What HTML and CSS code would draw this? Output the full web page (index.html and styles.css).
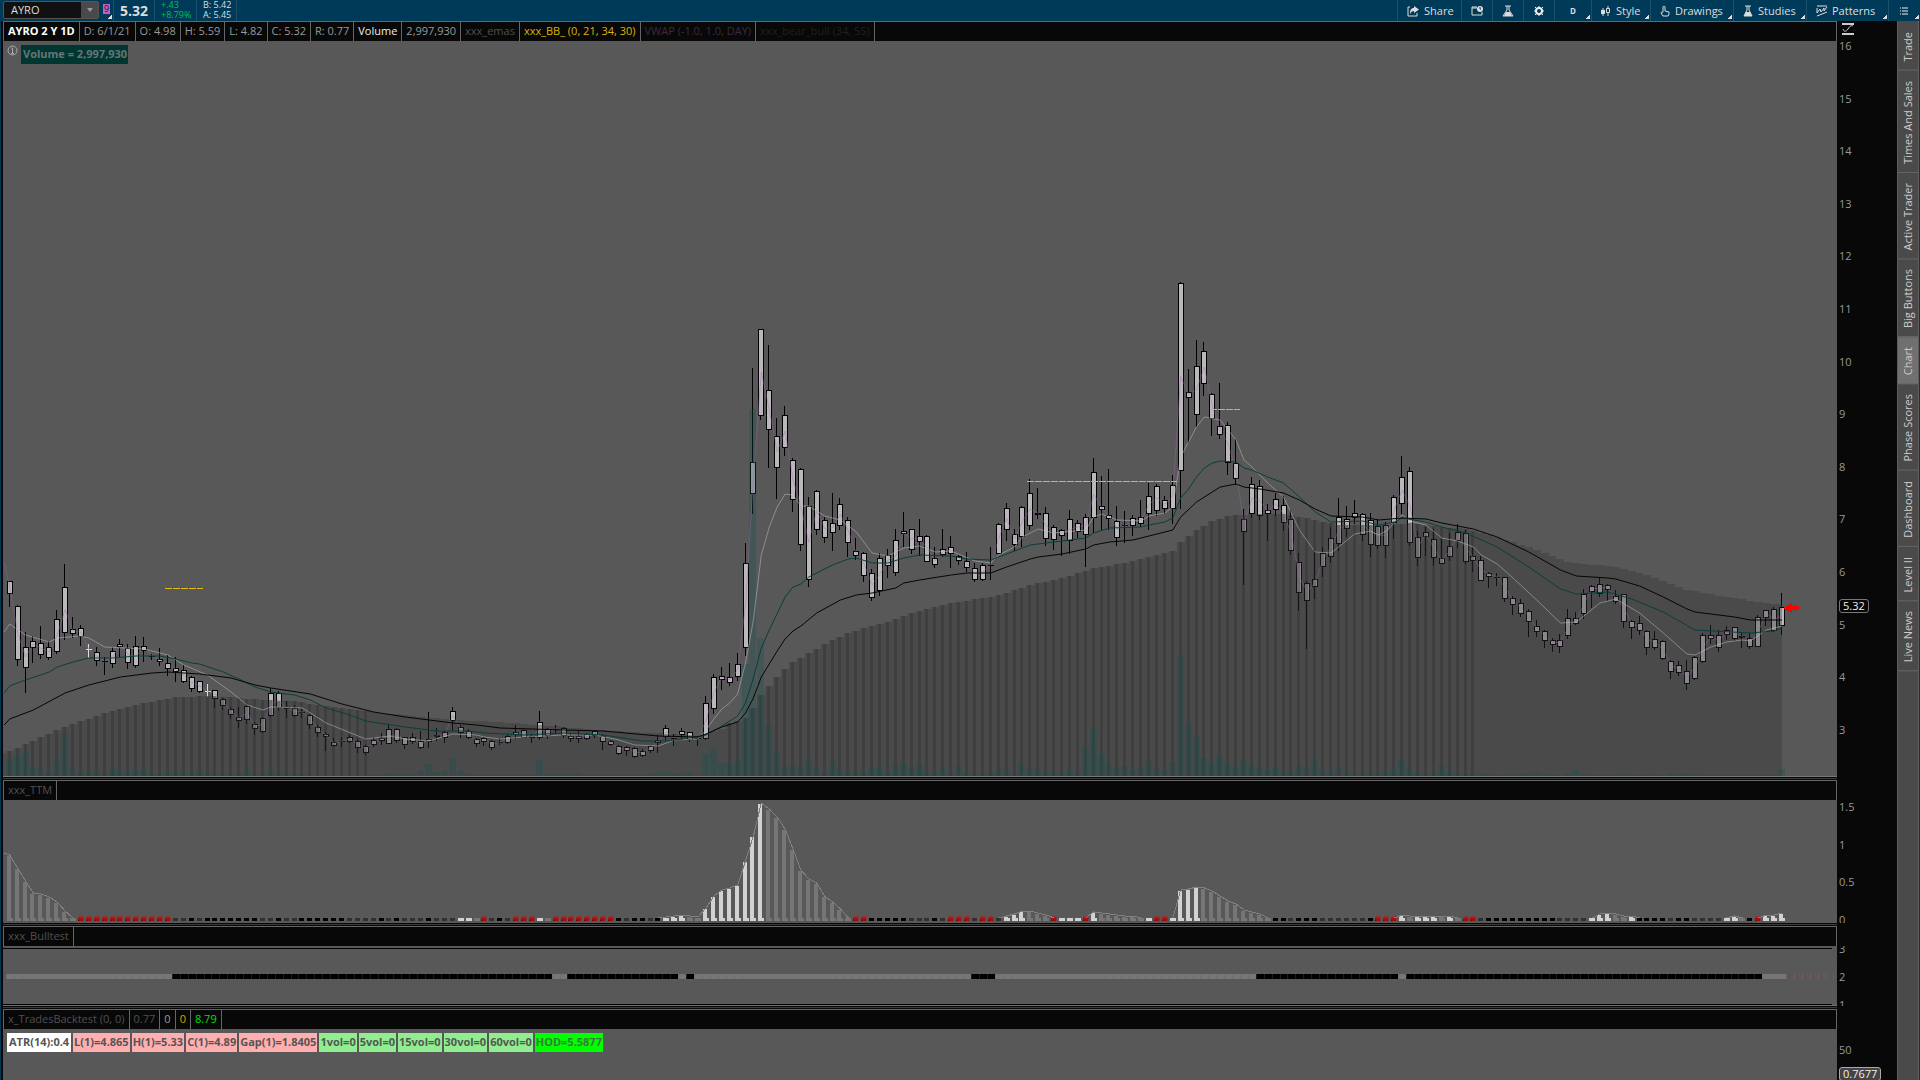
FILE: index.html
```html
<!DOCTYPE html>
<html lang="en">
<head>
    <meta charset="UTF-8">
    <meta name="viewport" content="width=device-width, initial-scale=1.0">
    <title>AYRO - Charts</title>
    <link rel="stylesheet" href="styles.css">
</head>
<body>

<!-- Top toolbar -->
<header class="toolbar">
    <div class="symbol-box">
        <input type="text" class="symbol-input" value="AYRO" aria-label="Symbol">
        <button type="button" class="symbol-drop" aria-label="Symbol list"><svg width="6" height="4" viewBox="0 0 6 4"><path d="M0 0h6L3 4z" fill="#999"/></svg></button>
    </div>
    <button type="button" class="link-btn corner" aria-label="Link color 9"><span class="link-badge">9</span></button>
    <div class="last">5.32</div>
    <div class="change"><span>+.43</span><span>+8.79%</span></div>
    <div class="bidask"><span>B: 5.42</span><span>A: 5.45</span></div>

    <nav class="tools">
        <button type="button" class="tool share">
            <svg width="12" height="12" viewBox="0 0 12 12"><path d="M3 2H1v9h9V8" fill="none" stroke="#ddd"/><path d="M7 1l5 3.500-5 3.500V6C5 6 4 7 3 9c0-4 1-6 4-6z" fill="#ddd"/></svg>
            Share
        </button>
        <button type="button" class="tool icon-only" aria-label="Detach">
            <svg width="12" height="12" viewBox="0 0 12 12"><path d="M6 2H1v8h10V7M1 3h5" fill="none" stroke="#ddd"/><circle cx="9" cy="4" r="3" fill="#ddd"/><path d="M9 2v2h1" stroke="#003a59" fill="none"/></svg>
        </button>
        <button type="button" class="tool icon-only" aria-label="Edit studies">
            <svg width="12" height="12" viewBox="0 0 12 12"><path d="M3 1h6M5 1v4L1 11h10L7 5V1" fill="none" stroke="#ddd"/><path d="M4 7h4l2 4H2z" fill="#ddd"/></svg>
        </button>
        <button type="button" class="tool icon-only" aria-label="Chart settings">
            <svg width="12" height="12" viewBox="0 0 12 12"><circle cx="6" cy="6" r="3" fill="none" stroke="#eee" stroke-width="2"/><path d="M6 1v2M6 9v2M1 6h2M9 6h2M2 2l2 2M8 8l2 2M10 2L8 4M4 8l-2 2" stroke="#eee"/></svg>
        </button>
        <button type="button" class="tool period corner">D</button>
        <button type="button" class="tool style corner">
            <svg width="10" height="12" viewBox="0 0 10 12"><path d="M2 3v8M7 1v10" stroke="#ddd"/><path d="M0 5h4v4H0z" fill="#ddd"/><path d="M5.500 3.500h3v4h-3z" fill="#003a59" stroke="#ddd"/></svg>
            Style
        </button>
        <button type="button" class="tool drawings corner">
            <svg width="10" height="12" viewBox="0 0 10 12"><path d="M3 7V2c0-1 2-1 2 0v4l4 1v2L8 11H3L1 8c0-1 1-1 2 0" fill="none" stroke="#ddd"/></svg>
            Drawings
        </button>
        <button type="button" class="tool studies corner">
            <svg width="10" height="12" viewBox="0 0 10 12"><path d="M2 1h6M4 1v4L1 11h8L6 5V1" fill="none" stroke="#ddd"/><path d="M3 7h4l2 4H1z" fill="#ddd"/></svg>
            Studies
        </button>
        <button type="button" class="tool patterns corner">
            <svg width="12" height="12" viewBox="0 0 12 12"><path d="M1 1h10M1 11l10-4M1 3v5l3-4 1 3 3-4v3l3-4" fill="none" stroke="#ddd"/></svg>
            Patterns
        </button>
        <button type="button" class="tool menu corner" aria-label="Menu">
            <svg width="8" height="8" viewBox="0 0 8 8"><path d="M0 1h1M2 1h6M0 4h1M2 4h6M0 7h1M2 7h6" stroke="#eee"/></svg>
        </button>
    </nav>
</header>

<div class="workspace">
    <main class="charts">

        <!-- Price -->
        <section class="row price-row">
            <div class="pane">
                <div class="legend">
                    <span class="strong">AYRO 2 Y 1D</span>
                    <span>D: 6/1/21</span>
                    <span>O: 4.98</span>
                    <span>H: 5.59</span>
                    <span>L: 4.82</span>
                    <span>C: 5.32</span>
                    <span>R: 0.77</span>
                    <span class="white">Volume</span>
                    <span>2,997,930</span>
                    <span class="dim">xxx_emas</span>
                    <span class="gold">xxx_BB_ (0, 21, 34, 30)</span>
                    <span class="violet">VWAP (-1.0, 1.0, DAY)</span>
                    <span class="faint">xxx_bear_bull (34, 55)</span>
                </div>
                <div class="plot">
                    <svg id="price" viewBox="3 -1 1834 736" preserveAspectRatio="none"></svg>
                    <div class="overlay">
                        <svg width="11" height="11" viewBox="0 0 11 11"><circle cx="5.500" cy="5.500" r="4.500" fill="none" stroke="#aaa"/><path d="M4.500 3h1v5M4 8.500h3" fill="none" stroke="#aaa"/></svg>
                        <span class="volume-label">Volume = 2,997,930</span>
                    </div>
                </div>
            </div>
            <div class="axis">
                <div class="axis-head">
                    <svg width="12" height="12" viewBox="0 0 12 12"><path d="M0 1h12M0 11h12" stroke="#ccc" stroke-width="2"/><path d="M1 6c1 3 3 3 5 0s3-4 5-3" fill="none" stroke="#ccc"/></svg>
                </div>
                <div class="scale">
                    <ul class="price-scale">
                        <li>16</li><li>15</li><li>14</li><li>13</li><li>12</li><li>11</li><li>10</li>
                        <li>9</li><li>8</li><li>7</li><li>6</li><li>5</li><li>4</li><li>3</li>
                    </ul>
                    <span class="tag last-tag">5.32</span>
                </div>
            </div>
        </section>

        <div class="splitter"></div>

        <!-- TTM -->
        <section class="row ttm-row">
            <div class="pane">
                <div class="legend"><span class="dim">xxx_TTM</span></div>
                <div class="plot"><svg id="ttm" viewBox="3 0 1834 123" preserveAspectRatio="none"></svg></div>
            </div>
            <div class="axis">
                <div class="axis-head"></div>
                <div class="scale">
                    <ul class="ttm-scale"><li>1.5</li><li>1</li><li>0.5</li><li>0</li></ul>
                </div>
            </div>
        </section>

        <div class="splitter"></div>

        <!-- Bulltest -->
        <section class="row bull-row">
            <div class="pane">
                <div class="legend"><span class="dim">xxx_Bulltest</span></div>
                <div class="plot"><svg id="bull" viewBox="3 0 1834 60" preserveAspectRatio="none"></svg></div>
            </div>
            <div class="axis">
                <div class="axis-head"></div>
                <div class="scale">
                    <ul class="bull-scale"><li>3</li><li>2</li><li>1</li></ul>
                </div>
            </div>
        </section>

        <div class="splitter"></div>

        <!-- Backtest -->
        <section class="row backtest-row">
            <div class="pane">
                <div class="legend">
                    <span class="dim">x_TradesBacktest (0, 0)</span>
                    <span class="dim">0.77</span>
                    <span>0</span>
                    <span class="orange">0</span>
                    <span class="green">8.79</span>
                </div>
                <div class="plot">
                    <div class="labels">
                        <span class="l-white">ATR(14):0.4</span>
                        <span class="l-pink">L(1)=4.865</span>
                        <span class="l-pink">H(1)=5.33</span>
                        <span class="l-pink">C(1)=4.89</span>
                        <span class="l-pink">Gap(1)=1.8405</span>
                        <span class="l-green">1vol=0</span>
                        <span class="l-green">5vol=0</span>
                        <span class="l-green">15vol=0</span>
                        <span class="l-green">30vol=0</span>
                        <span class="l-green">60vol=0</span>
                        <span class="l-lime">HOD=5.5877</span>
                    </div>
                </div>
            </div>
            <div class="axis">
                <div class="axis-head"></div>
                <div class="scale">
                    <ul class="backtest-scale"><li>50</li></ul>
                    <span class="tag backtest-tag">0.7677</span>
                </div>
            </div>
        </section>
    </main>

    <!-- Gadget tabs -->
    <aside class="tabs">
        <button type="button">Trade</button>
        <button type="button">Times And Sales</button>
        <button type="button">Active Trader</button>
        <button type="button">Big Buttons</button>
        <button type="button" class="active">Chart</button>
        <button type="button">Phase Scores</button>
        <button type="button">Dashboard</button>
        <button type="button">Level II</button>
        <button type="button">Live News</button>
    </aside>
</div>

<script src="chart.js"></script>
</body>
</html>
```
FILE: styles.css
```css
* {
    box-sizing: border-box;
}

body {
    margin: 0;
    height: 100vh;
    display: flex;
    flex-direction: column;
    overflow: hidden;
    background: #080808;
    color: #999;
    font-family: "Open Sans", sans-serif;
    font-size: 11px;
    line-height: 14px;
}

button,
input {
    font: inherit;
    color: inherit;
    margin: 0;
    padding: 0;
    border: none;
    background: none;
}

button {
    cursor: pointer;
}

svg {
    display: block;
    flex: none;
}

/* Toolbar */
.toolbar {
    flex: none;
    height: 21px;
    display: flex;
    background: #003a59;
    color: #ddd;
}

.symbol-box {
    width: 96px;
    height: 18px;
    margin: 1px 0 0 3px;
    display: flex;
    border: 1px solid #555;
    border-radius: 2px;
    background: #111;
}

.symbol-input {
    flex: 1;
    min-width: 0;
    padding-left: 7px;
}

.symbol-drop {
    width: 17px;
    display: flex;
    justify-content: center;
    align-items: center;
    background: #4a4a4a;
}

.link-btn {
    width: 15px;
    padding-left: 4px;
    border-right: 1px solid #1c506c;
}

.link-badge {
    display: block;
    width: 7px;
    height: 10px;
    margin-bottom: 3px;
    background: #c45ec4;
    color: #222;
    font-size: 9px;
    line-height: 10px;
}

.last {
    width: 41px;
    padding-left: 6px;
    border-right: 1px solid #1c506c;
    font-size: 14px;
    font-weight: bold;
    line-height: 21px;
}

.change,
.bidask {
    display: flex;
    flex-direction: column;
    width: 42px;
    padding-left: 6px;
    border-right: 1px solid #1c506c;
    font-size: 9px;
    line-height: 10px;
    white-space: nowrap;
}

.change {
    color: #00c050;
}

.bidask {
    width: 40px;
}

.tools {
    margin-left: auto;
    display: flex;
}

.tool {
    display: flex;
    align-items: center;
    gap: 5px;
    padding-left: 9px;
    border-left: 1px solid #1c506c;
}

.icon-only {
    width: 31px;
}

.share {
    width: 64px;
}

.period {
    width: 37px;
    padding-left: 15px;
    font-size: 8px;
    font-weight: bold;
}

.style {
    width: 59px;
}

.drawings {
    width: 83px;
}

.studies {
    width: 73px;
}

.patterns {
    width: 82px;
    gap: 4px;
}

.menu {
    width: 32px;
    padding-left: 11px;
}

/* Small corner mark of the drop-down buttons */
.corner {
    background: linear-gradient(135deg, transparent 50%, #ddd 50%) no-repeat right 1px bottom 2px / 4px 4px;
}

/* Workspace */
.workspace {
    flex: 1;
    min-height: 0;
    display: flex;
    border: solid #003a59;
    border-width: 0 1px;
}

.charts {
    flex: 1;
    min-width: 0;
    display: flex;
    flex-direction: column;
    padding-left: 2px;
}

.row {
    flex: none;
    display: flex;
}

.price-row {
    flex: 1;
    min-height: 0;
}

.ttm-row {
    height: 143px;
}

.bull-row {
    height: 80px;
}

.backtest-row {
    height: 71px;
}

.splitter {
    flex: none;
    height: 3px;
    margin-right: 60px;
    border: solid #080808;
    border-width: 1px 0;
    background: #3a3a3a;
}

.pane {
    flex: 1;
    min-width: 0;
    display: flex;
    flex-direction: column;
}

.legend {
    flex: none;
    height: 20px;
    display: flex;
    border: 1px solid #666;
    border-bottom: none;
    background: #080808;
}

.legend span {
    padding: 2px 4px 0;
    border-right: 1px solid #666;
    white-space: nowrap;
}

.legend .strong {
    color: #fff;
    font-weight: bold;
}

.legend .white {
    color: #eee;
}

.legend .dim {
    color: #505050;
}

.legend .gold {
    color: #dbb400;
}

.legend .violet {
    color: #3e2a42;
}

.legend .faint {
    color: #202020;
}

.legend .orange {
    color: #dba000;
}

.legend .green {
    color: #00e000;
}

.plot {
    position: relative;
    flex: 1;
    min-height: 0;
    background: #585858;
}

.plot > svg {
    width: 100%;
    height: 100%;
}

.overlay {
    position: absolute;
    top: 4px;
    left: 4px;
    display: flex;
    gap: 3px;
}

.volume-label {
    padding: 2px 1px 3px 2px;
    background: #003632;
    color: #647674;
    font-weight: bold;
}

/* Axis */
.axis {
    flex: none;
    width: 60px;
    display: flex;
    flex-direction: column;
}

.axis-head {
    flex: none;
    height: 20px;
    padding: 2px 0 0 5px;
}

.scale {
    position: relative;
    flex: 1;
    min-height: 0;
    display: flex;
    flex-direction: column;
    overflow: hidden;
}

.scale ul {
    flex: 1;
    display: flex;
    flex-direction: column;
    justify-content: space-between;
    margin: 0;
    padding: 0 0 0 2px;
    list-style: none;
}

.scale .price-scale {
    margin-bottom: 42px;
    line-height: 10px;
}

.scale .ttm-scale {
    margin-bottom: -4px;
}

.scale .bull-scale {
    margin: -4px 0 -6px;
}

.scale .backtest-scale {
    margin-top: 14px;
}

.tag {
    position: absolute;
    left: 2px;
    padding: 0 3px;
    border: 1px solid #777;
    border-radius: 3px;
    background: #080808;
    color: #eee;
    line-height: 12px;
}

.last-tag {
    top: calc(76% - 1px);
}

.backtest-tag {
    bottom: -1px;
    background: #444;
    border-color: #aaa;
}

/* Study labels */
.labels {
    display: flex;
    gap: 2px;
    padding: 4px 0 0 4px;
}

.labels span {
    padding: 2px 1px 3px;
    color: #555;
    font-weight: bold;
}

.labels .l-white {
    background: #fff;
    padding-right: 2px;
    padding-left: 2px;
}

.labels .l-pink {
    background: #ffafaf;
}

.labels .l-green {
    background: #90ee90;
}

.labels .l-lime {
    background: #00ff00;
    color: #3c7a3c;
}

/* Tabs */
.tabs {
    flex: none;
    width: 22px;
    display: flex;
    flex-direction: column;
    padding-top: 1px;
    border: solid #5e5e5e;
    border-width: 0 1px;
    background: #4a4a4a;
    color: #ccc;
}

/* Turned half round, so the top border is drawn at the bottom */
.tabs button {
    padding: 8px 3px 10px;
    border-top: 1px solid #666;
    writing-mode: vertical-rl;
    transform: rotate(180deg);
    white-space: nowrap;
}

.tabs .active {
    background: #707070;
}
```
FILE: chart.js
```js
const STEP = 7.912;
const FIRST = 9.7;

// [high, body top, body bottom, low]
const candles = [
    [539,539,551,564],[563,564,617,623],[590,605,625,650],[594,599,605,620],[584,601,612,616],[599,605,615,617],[568,577,609,611],[522,545,590,597],[575,587,591,595],[583,586,594,603],
    [602,607,607,615,'w'],[605,610,618,623],[615,619,619,632],[605,609,621,625],[597,602,604,614],[602,606,620,626],[594,604,623,625],[595,604,608,619],[612,614,614,617],[606,617,619,623],
    [613,621,626,633],[615,626,629,639],[623,628,639,640],[634,635,646,649],[639,639,649,650],[642,649,649,654,'w'],[648,648,656,665],[656,657,663,667],[665,667,672,676],[665,675,678,685],
    [662,664,677,681],[680,682,686,692],[675,676,689,690],[646,651,673,674],[649,651,665,668],[659,665,666,675],[663,666,673,674],[667,670,670,675],[672,673,682,686],[683,685,690,694],
    [690,692,694,708],[696,700,703,704],[695,699,699,704],[693,695,699,700],[697,699,705,710],[703,704,710,712],[695,698,702,704],[691,696,698,702],[683,687,701,701],[686,687,698,700],
    [695,695,702,706],[691,695,699,701],[689,699,705,706],[670,697,699,705],[686,693,694,698],[689,690,695,700],[665,669,678,688],[683,685,690,695],[687,689,695,696],[696,697,701,704],
    [695,696,699,703],[698,699,705,707],[696,700,700,702],[693,694,700,701],[683,690,692,696],[687,688,695,695],[692,694,695,700],[669,680,695,697],[686,687,693,696],[683,687,687,691],
    [685,686,693,695],[691,694,696,699],[689,694,696,700],[691,692,696,697],[688,689,693,695],[692,694,699,707],[698,699,702,703],[703,704,711,712],[704,705,708,713],[705,706,714,715],
    [707,709,713,714],[703,704,708,710],[693,698,700,710],[683,686,694,697],[692,696,696,703],[686,689,692,697],[690,690,697,699],[694,696,696,703],[654,661,696,697],[632,635,666,671],
    [625,634,637,647],[621,635,640,643],[611,622,634,638],[501,521,605,613],[326,420,451,471],[287,287,373,377],[303,348,387,425],[376,394,425,456],[364,373,405,413],[416,418,457,469],
    [426,427,502,508],[455,464,537,544],[448,449,487,492],[475,478,495,500],[451,481,490,508],[456,462,483,487],[475,478,500,514],[496,509,513,517],[510,511,533,539],[527,531,555,558],
    [511,516,548,553],[507,513,523,535],[487,498,530,533],[470,489,491,504],[487,487,507,511],[477,494,499,513],[493,494,519,519],[505,516,522,525],[487,507,512,514],[494,505,511,525],
    [513,514,518,522],[510,519,525,529],[521,526,537,539],[521,523,537,538],[505,523,523,537],[481,482,511,511],[461,466,487,498],[487,492,502,508],[464,465,494,504],[437,451,483,487],
    [446,471,472,476],[465,471,496,503],[483,485,497,507],[487,488,493,513],[468,477,498,511],[478,481,489,495],[472,475,492,524],[416,430,475,490],[434,464,467,488],[427,473,476,487],
    [464,479,495,503],[469,483,483,500],[473,476,483,493],[458,475,481,484],[441,454,471,487],[442,444,468,473],[454,458,466,471],[433,443,466,481],[240,241,428,466],[327,350,355,400],
    [298,324,372,384],[300,309,341,353],[351,352,376,393],[341,384,392,396],[380,383,420,432],[397,421,436,442],[467,477,489,542],[435,442,471,475],[438,444,473,477],[462,468,471,498],
    [451,457,467,473],[454,463,480,488],[468,477,508,512],[511,520,550,568],[539,541,558,606],[507,537,544,556],[505,511,524,534],[485,496,514,520],[456,475,501,508],[464,477,486,494],
    [458,471,475,481],[471,472,492,498],[471,478,502,514],[477,484,503,506],[480,483,503,515],[453,455,480,496],[414,435,461,471],[425,429,500,503],[489,495,515,523],[485,490,494,513],
    [487,497,515,523],[497,516,521,521],[491,504,514,518],[482,490,498,505],[488,491,519,521],[505,514,518,529],[514,518,538,538],[530,531,534,545],[531,535,535,543],[535,535,556,559],
    [554,556,562,572],[557,561,571,574],[567,569,579,594],[578,584,589,594],[588,589,598,605],[596,598,602,609],[592,598,604,610],[567,576,593,596],[570,576,581,582],[547,552,571,576],
    [543,544,549,565],[536,542,551,554],[542,543,547,558],[548,554,559,561],[552,552,579,585],[578,579,585,596],[574,581,588,592],[588,589,605,612],[589,597,605,607],[598,599,616,617],
    [618,619,629,636],[619,623,630,633],[618,629,641,647],[614,615,636,637],[591,593,619,620],[583,593,596,601],[588,593,605,609],[584,588,592,597],[585,585,596,598],[591,594,595,605],
    [591,596,604,606],[573,575,604,604],[568,568,575,583],[565,567,588,589],[551,565,583,592]
];

// Moving averages as [bar, y], straight lines in between
const cloud = [[-1,753],[0,751],[2,744],[7,727],[12,713],[17,703],[21,697],[26,696],[32,700],[36,701],[40,706],[46,712],[50,715],[56,720],[62,722],[70,727],[78,732],[82,733],[87,736],[90,729],[91,723],[93,718],[94,708],[95,695],[96,686],[97,677],[98,669],[99,662],[101,653],[103,644],[106,633],[109,626],[111,622],[114,613],[119,603],[123,598],[125,595],[129,585],[133,578],[137,568],[141,563],[145,555],[147,551],[148,542],[150,530],[152,521],[154,516],[157,514],[161,514],[164,518],[168,525],[173,525],[177,523],[180,526],[184,529],[188,537],[192,547],[197,562],[203,567],[207,575],[212,590],[217,597],[222,603],[224,604]];
const slow = [[-0.7,725],[0,719],[3,710],[7,693],[10,685],[14,677],[18,673],[20,672],[24,674],[28,678],[31,685],[33,688],[38,694],[42,704],[46,712],[50,717],[56,723],[59,725],[62,728],[70,730],[75,731],[82,736],[87,737],[88,734],[90,727],[92,722],[93,713],[94,698],[95,677],[97,651],[98,639],[99,631],[100,626],[102,613],[105,600],[107,595],[109,593],[112,588],[113,583],[115,580],[119,575],[121,573],[124,573],[126,567],[129,559],[130,557],[133,554],[136,549],[137,545],[139,542],[142,540],[145,534],[147,530],[148,517],[150,502],[152,492],[153,487],[155,484],[156,487],[158,489],[161,493],[163,500],[165,509],[167,516],[171,517],[173,520],[176,518],[179,519],[181,523],[183,526],[185,529],[188,537],[192,552],[196,570],[198,576],[202,578],[203,579],[206,586],[209,597],[212,609],[213,612],[218,617],[220,620],[224,620]];
const mid = [[-0.7,693],[0,686],[2,680],[5,672],[6,667],[8,662],[10,658],[13,658],[16,656],[19,656],[21,659],[23,663],[24,664],[27,672],[29,679],[31,687],[33,692],[36,695],[38,700],[40,708],[43,715],[45,721],[50,727],[54,731],[58,731],[60,733],[65,735],[70,733],[75,735],[80,741],[83,741],[85,739],[88,735],[90,726],[92,716],[93,703],[94,678],[95,648],[96,630],[98,597],[99,587],[100,584],[101,577],[104,565],[106,559],[107,558],[109,563],[111,563],[113,558],[115,555],[119,556],[121,559],[124,560],[125,557],[127,551],[129,545],[131,543],[134,540],[136,538],[137,533],[139,528],[143,527],[144,525],[146,522],[147,518],[148,498],[149,489],[150,477],[151,468],[152,463],[153,461],[155,462],[156,468],[157,470],[159,477],[161,483],[163,497],[165,512],[167,522],[171,521],[173,525],[175,522],[176,518],[179,522],[181,527],[184,533],[188,547],[192,567],[196,589],[198,594],[202,592],[205,599],[209,612],[213,630],[220,633],[223,631],[224,628]];
const fast = [[-0.7,632],[0,624],[2,635],[5,642],[6,638],[9,636],[10,638],[12,647],[17,649],[20,655],[22,665],[25,675],[28,692],[30,705],[32,710],[33,707],[37,708],[40,723],[45,739],[48,736],[50,739],[53,741],[56,734],[59,735],[60,737],[62,739],[65,737],[70,735],[74,735],[77,740],[79,745],[82,746],[84,740],[87,739],[88,730],[89,719],[90,709],[91,703],[92,694],[93,663],[94,620],[95,555],[96,527],[97,507],[98,494],[99,495],[100,506],[101,506],[103,516],[105,520],[107,532],[109,553],[111,556],[113,548],[115,546],[117,552],[119,551],[122,561],[124,563],[125,555],[127,547],[128,537],[130,529],[132,533],[136,530],[137,517],[138,514],[140,520],[143,521],[144,516],[146,513],[147,507],[148,457],[149,442],[150,427],[151,417],[153,420],[155,440],[156,460],[157,467],[159,483],[161,497],[163,530],[165,552],[167,553],[170,534],[172,531],[173,535],[174,531],[176,515],[177,521],[179,525],[181,538],[183,541],[185,547],[186,555],[188,564],[190,578],[193,600],[196,623],[198,622],[201,603],[203,599],[206,613],[209,633],[212,654],[213,655],[215,647],[217,642],[219,640],[220,641],[222,630],[224,626]];

// Bar heights by start index, all others are 1
const volume = {
    0: [17,21,24,9,9,5,16,43,9,5,4,5,3,8,4,4,6,6,2,2,4,3,4,2,5,2,3,2,3,3,7,3,2,6,4,3,2,2],
    48: [3,2,2,2,5,12,4,5,18,5,3],
    67: [16,2,2,2,2,3], 81: [2,3,4,3,3,4],
    88: [22,27,13,13,16,112,367,138,51,24,9,11,9,18,9,5,14,7,5,3,4,8,10,5,11,13,7,11,5,5,8,5,10,4,3,2,4,7,7,3,13,7,7,4,5,3,7,3,28,47,22,12,9,10,6,9,15,7,6,14,121,53,39,18,12,21,12,9,15,11,7,6,8,4,6,10,8,16,7,4,8,4,3,3,4,3,4,6,16,7,4,3,3,11,4,3,2,3,3,2,1,1,2,3,3,4,2,2,1,3,7,2],
    204: [2], 207: [2], 210: [3,2,3,2], 224: [7]
};

const ttmBars = {
    0: [65,52,39,27,26,23,18,9], 83: [3,4,5,4,3],
    88: [12,24,30,32,35,59,84,117,111,103,91,71,50,41,37,24,18,11],
    126: [4,6,9,9,7,5], 137: [8,7,6,5,4,4],
    148: [30,31,33,32,29,24,19,16,10,8,6], 176: [5,4,4,4,4,4,4],
    201: [6,7,6,4,4], 218: [4], 222: [5,5,7]
};

// w up, g fading, k and d squeeze, r dot; letter followed by run length
const ttmDots = 'g9 r12 d2 k1 d1 k7 d2 k1 d2 k6 d4 k1 d1 k1 d3 k1 d3 w2 g1 r1 d1 k1 d1 r3 w1 g1 r8 k1 d1 k2 d1 k1 w3 g2 w8 g11 r2 k5 d3 k1 d1 r3 d1 r2 d1 w3 g3 r1 w3 r1 w1 g6 w1 r2 w4 g9 k2 d1 k3 d6 k1 r3 w1 g1 w3 g1 w1 g1 r2 d1 k9 d4 w3 g2 w1 k4 d1 k2 d4 w2 g1 k1 r1 w3';
const bullRuns = 'g21 k48 g2 k14 g1 k1 g35 k3 g33 k18 g1 k45 g3';

const colors = { w: '#d2d2d2', g: '#767676', k: '#000', d: '#303030', r: '#5a0000' };

function barX(i) {
    return FIRST + i * STEP;
}

function rect(x, y, w, h, fill) {
    return `<rect x="${Math.round(x)}" y="${y}" width="${w}" height="${h}" fill="${fill}"/>`;
}

function line(points, color) {
    const d = points.map(p => barX(p[0]).toFixed(1) + ',' + p[1]).join(' ');
    return `<polyline points="${d}" fill="none" stroke="${color}"/>`;
}

function valueAt(points, i) {
    for (let k = 1; k < points.length; k++) {
        const a = points[k - 1];
        const b = points[k];
        if (i <= b[0]) {
            return a[1] + (b[1] - a[1]) * (i - a[0]) / (b[0] - a[0]);
        }
    }
    return points[points.length - 1][1];
}

function spread(blocks) {
    const out = [];
    for (const start in blocks) {
        blocks[start].forEach((v, k) => { out[Number(start) + k] = v; });
    }
    return out;
}

function expand(runs) {
    return runs.split(' ').map(r => r[0].repeat(Number(r.slice(1)))).join('');
}

function drawPrice() {
    let s = '';

    // Candles
    candles.forEach((c, i) => {
        const x = Math.round(barX(i)) - 3;
        const ink = c[4] ? '#ddd' : '#000';
        s += rect(x + 2, c[0], 1, c[3] - c[0] + 1, ink);
        s += rect(x, c[1], 6, c[2] - c[1] + 1, ink);
        if (c[2] - c[1] > 1) {
            s += rect(x + 1, c[1] + 1, 4, c[2] - c[1] - 1, '#bab8ba');
        }
    });

    // Cloud with its stripes
    let d = 'M3 734';
    let stripes = '';
    for (let i = -1; i <= 224; i++) {
        const y = Math.round(valueAt(cloud, i)) - 42;
        const left = Math.max(3, Math.round(barX(i) - 4));
        const right = i === 224 ? 1782 : Math.round(barX(i + 1) - 4);
        d += `L${left} ${y}L${right} ${y}`;
        if (i >= 0 && (i < 46 || (i > 90 && i < 186))) {
            stripes += rect(barX(i) - 2, y, 3, 734 - y, 'rgba(40,40,40,.3)');
        }
    }
    s += `<path d="${d}L1782 734z" fill="rgba(48,48,48,.35)"/>` + stripes;

    // Volume
    const vol = spread(volume);
    candles.forEach((c, i) => {
        const h = vol[i] || 1;
        s += rect(barX(i) - 4, 734 - h, 7, h, 'rgba(8,84,78,.27)');
    });
    s += rect(3, 734, 1834, 1, '#777');

    // Averages
    const closes = candles.map((c, i) => [i, (c[1] + c[2]) / 2 + 42]);
    closes.unshift([-0.7, 562]);
    s += '<g transform="translate(0 -42)" shape-rendering="auto">';
    s += line(closes, 'rgba(160,100,175,.4)');
    s += line(fast, 'rgba(195,195,195,.5)');
    s += line(mid, '#083f3c');
    s += line(slow, '#050505');
    s += '</g>';

    // Resistance levels
    s += '<path d="M165 546H203M1027 439H1177M1210 367H1240" transform="translate(0 .5)" stroke="#e6b800" stroke-dasharray="7 1" fill="none"/>';

    // Last price arrow
    s += '<path d="M1783 566l9-5v3h7v4h-7v3z" fill="#f00"/>';
    document.getElementById('price').innerHTML = '<g shape-rendering="crispEdges">' + s + '</g>';
}

function drawTtm() {
    const bars = spread(ttmBars);
    const dots = expand(ttmDots);
    let s = '';
    const outline = [[-0.7, 53]];
    for (let i = 0; i < 225; i++) {
        const h = bars[i] || 0;
        const x = barX(i);
        outline.push([i, 120 - Math.max(h, 2)]);
        if (h) {
            s += rect(x - 3, 121 - h, 4, h, colors[dots[i]]);
        }
        s += rect(x - 3, 118, dots[i] === 'w' || dots[i] === 'g' ? 6 : 5, 3, colors[dots[i]]);
        if (dots[i] === 'r') {
            s += `<ellipse cx="${Math.round(x)}" cy="118.5" rx="3" ry="2.5" fill="rgba(190,20,20,.75)" shape-rendering="auto"/>`;
        }
    }
    // Outline only where the histogram is up
    let up = [];
    for (const p of outline) {
        up.push(p);
        if (p[1] === 118) {
            s += up.length > 2 ? line(up, '#808080') : '';
            up = [p];
        }
    }
    s += line(up, '#808080');
    document.getElementById('ttm').innerHTML = '<g shape-rendering="crispEdges">' + s + '</g>';
}

function drawBull() {
    let s = rect(3, 2, 1829, 1, '#000') + rect(3, 58, 1829, 1, '#000') + rect(3, 59, 1834, 1, '#707070');
    expand(bullRuns).split('').forEach((t, i) => {
        const x = Math.round(barX(i) - 4);
        const next = Math.round(barX(i + 1) - 4);
        s += rect(x, 28, next - x, 5, t === 'g' ? '#6e6e6e' : '#1c1c1c');
        s += rect(x + 1, 28, next - x - 1, 5, colors[t]);
    });
    for (let i = 225; i < 232; i++) {
        s += rect(barX(i) - 4, 28, 1, 5, '#7d5a62');
    }
    document.getElementById('bull').innerHTML = '<g shape-rendering="crispEdges">' + s + '</g>';
}

drawPrice();
drawTtm();
drawBull();
```
